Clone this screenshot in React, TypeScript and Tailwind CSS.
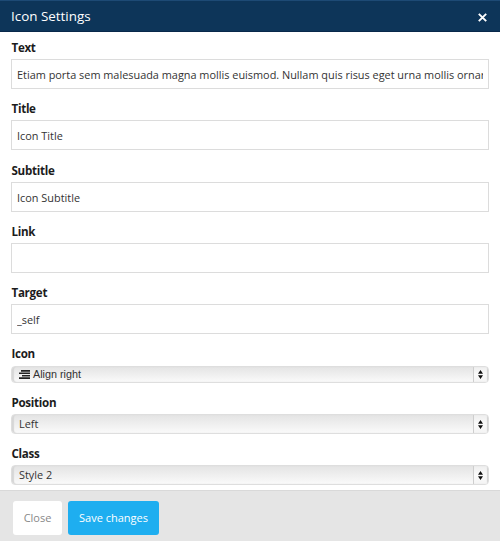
import React from "react";

const inputs = [
  { label: "Text", value: "Etiam porta sem malesuada magna mollis euismod. Nullam quis risus eget urna mollis ornare vel" },
  { label: "Title", value: "Icon Title" },
  { label: "Subtitle", value: "Icon Subtitle" },
  { label: "Link", value: "" },
  { label: "Target", value: "_self" },
];

function Label({ children }: { children: React.ReactNode }) {
  return (
    <div className="h-[21px] pl-[0.5px] text-[11.6px] leading-[20px] font-bold tracking-[-0.3px] text-[#1c1c1c]">
      {children}
    </div>
  );
}

function TextField({ label, value }: { label: string; value: string }) {
  return (
    <div className="h-[61.25px]">
      <Label>{label}</Label>
      <div className="h-[30px] border border-[#dcdcdc] bg-white px-[5px]">
        <div className="h-[28px] overflow-hidden whitespace-nowrap text-[10.9px] leading-[29px] text-[#333]">
          {value}
        </div>
      </div>
    </div>
  );
}

function SelectBox({ className, children }: { className: string; children: React.ReactNode }) {
  return (
    <div
      className={
        "flex overflow-hidden rounded-[4px] border border-[#dedede] bg-gradient-to-b from-[#e4e4e4] to-[#fafafa] shadow-[inset_2px_0_1px_#d6d6d6] " +
        className
      }
    >
      <div className="flex flex-1 items-center pl-[7px] text-[#333]">{children}</div>
      <div className="flex w-[15px] items-center justify-center border-l border-[#cecece] bg-gradient-to-b from-[#eeeeee] via-[#fafafa] to-[#f4f4f4] pr-[1px] shadow-[inset_-1px_0_1px_#d2d2d2]">
        <svg width="5" height="9" viewBox="0 0 5 9" fill="#111">
          <path d="M2.500 0 5 3.800H0zM0 5.200h5L2.500 9z" />
        </svg>
      </div>
    </div>
  );
}

export default function App() {
  return (
    <div className="flex h-[541px] w-[500px] flex-col overflow-hidden bg-white font-['Open_Sans',sans-serif]">
      <header className="flex h-[32px] shrink-0 items-center justify-between border-t border-b border-t-[#1d4a75] border-b-[#08284a] bg-[#0d3559] pr-[13px] pl-[11px]">
        <h1 className="text-[13.4px] leading-[30px] text-white">Icon Settings</h1>
        <svg className="mt-[3px]" width="9" height="9" viewBox="0 0 9 9" stroke="#fff" strokeWidth="1.9">
          <path d="M.8.8 8.200 8.200M8.200.8.8 8.200" />
        </svg>
      </header>
      <main className="h-[458px] shrink-0 overflow-hidden px-[11px] pt-[6px]">
        {inputs.map((f) => (
          <TextField key={f.label} label={f.label} value={f.value} />
        ))}
        <div className="h-[48.75px]">
          <Label>Icon</Label>
          <SelectBox className="mt-[0.5px] h-[17px]">
            <svg className="mr-[3px]" width="11" height="9" viewBox="0 0 11 9" fill="#222">
              <path d="M2 0h9v1.700H2zM0 2.400h11v1.700H0zM3 4.900h8v1.700H3zM0 7.300h11V9H0z" />
            </svg>
            <span className="font-['Liberation_Sans',sans-serif] text-[10.8px] leading-[15px]">Align right</span>
          </SelectBox>
        </div>
        <div className="h-[51px]">
          <Label>Position</Label>
          <SelectBox className="h-[20px]">
            <span className="text-[10.9px] leading-[18px]">Left</span>
          </SelectBox>
        </div>
        <div>
          <Label>Class</Label>
          <SelectBox className="h-[20px]">
            <span className="text-[10.9px] leading-[18px]">Style 2</span>
          </SelectBox>
        </div>
      </main>
      <footer className="flex h-[51px] shrink-0 gap-[6px] border-t border-[#d9d9d9] bg-[#e5e5e5] pt-[10px] pl-[13px] text-[11px]">
        <button className="h-[34px] w-[49px] rounded-[3px] bg-white text-[#888]">Close</button>
        <button className="h-[34px] w-[91px] rounded-[3px] bg-[#1eaef0] text-white">Save changes</button>
      </footer>
    </div>
  );
}
